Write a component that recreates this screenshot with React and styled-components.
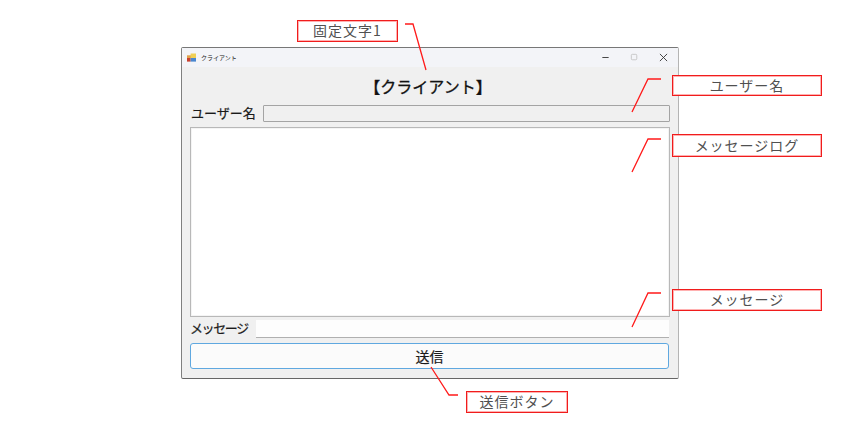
import styled, { createGlobalStyle } from "styled-components";

const GlobalStyle = createGlobalStyle`
  html, body {
    margin: 0;
    padding: 0;
    background: #ffffff;
  }
`;

const callouts = [
  { text: "固定文字1", x: 297, y: 20, w: 101, h: 22 },
  { text: "ユーザー名", x: 672, y: 75, w: 150, h: 21 },
  { text: "メッセージログ", x: 672, y: 134, w: 150, h: 23 },
  { text: "メッセージ", x: 672, y: 289, w: 150, h: 22 },
  { text: "送信ボタン", x: 466, y: 391, w: 102, h: 22 },
];

const leaders = [
  "405,24 413,24 426,70",
  "661,79 648,79 632,112",
  "661,139 648,139 632,172",
  "661,293 648,293 632,327",
  "431,367 449,395 458,395",
];

export default function App() {
  return (
    <Page>
      <GlobalStyle />
      <Window>
        <TitleBar>
          <AppIcon viewBox="0 0 10 10">
            <rect x="0" y="2" width="5" height="3" fill="#e2a24a" />
            <rect x="4" y="0" width="6" height="5" fill="#f0cf55" />
            <rect x="0" y="5" width="4" height="4" fill="#c8402f" />
            <rect x="4" y="5" width="6" height="4" fill="#4a86cf" />
          </AppIcon>
          <TitleText>クライアント</TitleText>
          <Controls>
            <ControlIcon viewBox="0 0 10 10">
              <path d="M1.5 5h7" stroke="#333" strokeWidth="1" />
            </ControlIcon>
            <ControlIcon viewBox="0 0 10 10">
              <rect x="1.5" y="1.5" width="6" height="6" rx="1" fill="none" stroke="#c4c4c4" />
            </ControlIcon>
            <ControlIcon viewBox="0 0 10 10">
              <path d="M1 1l8 8M9 1l-8 8" stroke="#333" strokeWidth="1" />
            </ControlIcon>
          </Controls>
        </TitleBar>
        <Body>
          <Heading>【クライアント】</Heading>
          <Row>
            <FieldLabel>ユーザー名</FieldLabel>
            <ReadOnlyField />
          </Row>
          <LogArea />
          <Row>
            <FieldLabel $tight>メッセージ</FieldLabel>
            <MessageField />
          </Row>
          <SendButton>送信</SendButton>
        </Body>
      </Window>

      <LeaderLayer viewBox="0 0 860 425">
        {leaders.map((points) => (
          <polyline key={points} points={points} fill="none" stroke="#ff1a1a" strokeWidth="1.3" />
        ))}
      </LeaderLayer>

      {callouts.map((c) => (
        <Callout key={c.text} $x={c.x} $y={c.y} $w={c.w} $h={c.h}>
          {c.text}
        </Callout>
      ))}
    </Page>
  );
}

const Page = styled.div`
  position: relative;
  width: 860px;
  height: 425px;
  padding: 47px 0 0 181px;
  box-sizing: border-box;
  overflow: hidden;
  font-family: "Noto Sans CJK JP", "Noto Sans", sans-serif;
`;

const Window = styled.div`
  width: 498px;
  height: 332px;
  box-sizing: border-box;
  display: flex;
  flex-direction: column;
  background: #f0f0f0;
  border: 1px solid #b4b4b4;
  border-top-color: #777777;
  border-bottom-color: #666666;
  border-left-color: #808080;
  border-radius: 2px;
`;

const TitleBar = styled.div`
  height: 19px;
  flex: none;
  display: flex;
  align-items: center;
  padding-left: 5px;
  background: #f3f4f8;
`;

const AppIcon = styled.svg`
  width: 9px;
  height: 10px;
  margin-right: 5px;
`;

const TitleText = styled.span`
  font-size: 6px;
  color: #222222;
`;

const Controls = styled.div`
  margin-left: auto;
  display: flex;
  align-items: center;
  gap: 20px;
  padding-right: 10px;
`;

const ControlIcon = styled.svg`
  width: 9px;
  height: 9px;
`;

const Body = styled.div`
  flex: 1;
  display: flex;
  flex-direction: column;
  padding: 0 8px 0 8px;
`;

const Heading = styled.div`
  height: 37px;
  line-height: 38px;
  text-align: center;
  font-size: 16px;
  color: #111111;
  margin-right: 4px;
  -webkit-text-stroke: 0.3px #111111;
`;

const Row = styled.div`
  display: flex;
  align-items: center;
  gap: 7px;
  padding-left: 1px;
`;

const FieldLabel = styled.span`
  font-size: 13px;
  line-height: 17px;
  letter-spacing: ${(p) => (p.$tight ? "-1.4px" : "0")};
  margin-left: ${(p) => (p.$tight ? "-1px" : "0")};
  padding-right: ${(p) => (p.$tight ? "1px" : "0")};
  padding-bottom: ${(p) => (p.$tight ? "0" : "2px")};
  color: #1a1a1a;
  white-space: nowrap;
  -webkit-text-stroke: 0.2px #1a1a1a;
`;

const ReadOnlyField = styled.div`
  flex: 1;
  height: 17px;
  box-sizing: border-box;
  background: #f0f0f0;
  border: 1px solid #a4a4a4;
  border-radius: 1px;
`;

const LogArea = styled.div`
  height: 190px;
  margin-top: 4px;
  box-sizing: border-box;
  background: #ffffff;
  border: 1px solid #b8b8b8;
  box-shadow: inset 0 0 0 1px #f4f4f4;
`;

const MessageField = styled.div`
  flex: 1;
  height: 18px;
  margin-top: 3px;
  box-sizing: border-box;
  background: #fdfdfd;
  border-bottom: 1px solid #b0b0b0;
  margin-right: 1px;
`;

const SendButton = styled.button`
  height: 26px;
  margin-top: 5px;
  margin-right: 1px;
  padding: 0;
  box-sizing: border-box;
  background: #fbfbfb;
  border: 1px solid #5fa8e0;
  border-radius: 3px;
  font-family: inherit;
  font-size: 14px;
  color: #1a1a1a;
  -webkit-text-stroke: 0.2px #1a1a1a;
`;

const LeaderLayer = styled.svg`
  position: absolute;
  top: 0;
  left: 0;
  width: 860px;
  height: 425px;
  pointer-events: none;
`;

const Callout = styled.div`
  position: absolute;
  left: ${(p) => p.$x}px;
  top: ${(p) => p.$y}px;
  width: ${(p) => p.$w}px;
  height: ${(p) => p.$h}px;
  box-sizing: border-box;
  display: flex;
  align-items: center;
  justify-content: center;
  padding-bottom: 2px;
  background: #ffffff;
  border: 1px solid #f01c1c;
  box-shadow: inset 0 0 0 1px rgba(255, 60, 60, 0.4);
  font-size: 14px;
  color: #505050;
  letter-spacing: 1px;
`;
